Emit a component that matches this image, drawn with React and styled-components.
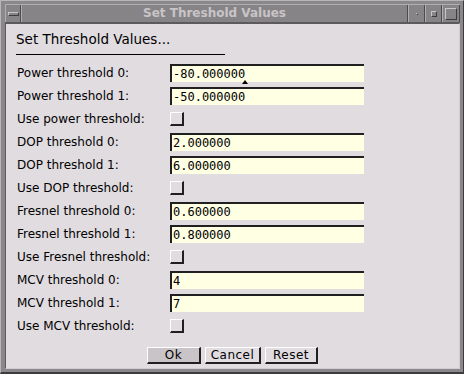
import { Fragment } from "react";
import styled, { createGlobalStyle } from "styled-components";

const Global = createGlobalStyle`
  html, body {
    margin: 0;
    padding: 0;
    background: #505050;
  }
`;

const Frame = styled.div`
  width: 464px;
  height: 374px;
  box-sizing: border-box;
  background: #8a888a;
  border-top: 1px solid #b8b6b8;
  border-left: 1px solid #b8b6b8;
  border-right: 1px solid #3c3c3c;
  border-bottom: 2px solid #3c3c3c;
  padding: 3px 3px 3px 4px;
  display: flex;
  flex-direction: column;
  font-family: "DejaVu Sans", sans-serif;
`;

const TitleBar = styled.div`
  height: 17px;
  display: flex;
  background: #868486;
  border-top: 1px solid #b0aeb0;
  border-bottom: 1px solid #5c5a5c;
`;

const TitleButton = styled.div`
  width: ${(p) => p.$w || 16}px;
  box-sizing: border-box;
  border-left: 1px solid #b0aeb0;
  border-right: 1px solid #4c4a4c;
  display: flex;
  align-items: center;
  justify-content: center;
`;

const Glyph = styled.div`
  width: ${(p) => p.$w}px;
  height: ${(p) => p.$h}px;
  box-sizing: border-box;
  border-top: 1px solid #c8c6c8;
  border-left: 1px solid #c8c6c8;
  border-right: 1px solid #3c3c3c;
  border-bottom: 1px solid #3c3c3c;
`;

const Title = styled.div`
  flex: 1;
  text-align: center;
  font-family: "DejaVu Sans", sans-serif;
  font-weight: bold;
  font-size: 12px;
  line-height: 16px;
  color: #c8c4c8;
  border-left: 1px solid #b0aeb0;
  border-right: 1px solid #4c4a4c;
`;

const Body = styled.div`
  flex: 1;
  background: #e0dce0;
  border-top: 1px solid #5c5a5c;
  border-left: 1px solid #5c5a5c;
  border-right: 1px solid #d0ced0;
  border-bottom: 1px solid #d0ced0;
  padding: 6px 0 0 10px;
  display: flex;
  flex-direction: column;
`;

const Heading = styled.div`
  font-family: "DejaVu Sans", sans-serif;
  font-size: 13.5px;
  color: #000;
  line-height: 18px;
  width: 209px;
  padding-bottom: 6px;
  border-bottom: 1.5px solid #000;
`;

const Grid = styled.div`
  margin-top: 9px;
  display: grid;
  grid-template-columns: 154px 194px;
  grid-auto-rows: 18px;
  row-gap: 5px;
  align-items: center;
`;

const Label = styled.div`
  font-size: 12px;
  color: #000;
  padding-left: 1px;
  line-height: 18px;
`;

const Field = styled.div`
  position: relative;
  height: 18px;
  box-sizing: border-box;
  background: #ffffe4;
  border-top: 2px solid #202020;
  border-left: 2px solid #202020;
  font-family: "DejaVu Sans Mono", monospace;
  font-size: 12px;
  line-height: 16px;
  padding-left: 1px;
  color: #000;
`;

const Caret = styled.span`
  position: relative;
  &::after {
    content: "";
    position: absolute;
    left: -3px;
    bottom: -3px;
    border-left: 3px solid transparent;
    border-right: 3px solid transparent;
    border-bottom: 4px solid #000;
  }
`;

const Check = styled.div`
  width: 14px;
  height: 14px;
  box-sizing: border-box;
  border-top: 1px solid #fff;
  border-left: 1px solid #fff;
  border-right: 2px solid #202020;
  border-bottom: 2px solid #202020;
  background: #e0dce0;
`;

const Buttons = styled.div`
  margin-top: 12px;
  margin-left: -10px;
  display: flex;
  justify-content: center;
  gap: 4px;
`;

const Button = styled.div`
  width: ${(p) => p.$w}px;
  height: 17px;
  box-sizing: border-box;
  background: ${(p) => (p.$active ? "#c8c4c8" : "#e0dce0")};
  border-top: 1px solid #fff;
  border-left: 1px solid #fff;
  border-right: 2px solid #202020;
  border-bottom: 2px solid #202020;
  font-size: 12px;
  line-height: 14px;
  text-align: center;
  letter-spacing: 0.5px;
  color: #000;
`;

const rows = [
  ["Power threshold 0:", "-80.000000", true],
  ["Power threshold 1:", "-50.000000"],
  ["Use power threshold:", null],
  ["DOP threshold 0:", "2.000000"],
  ["DOP threshold 1:", "6.000000"],
  ["Use DOP threshold:", null],
  ["Fresnel threshold 0:", "0.600000"],
  ["Fresnel threshold 1:", "0.800000"],
  ["Use Fresnel threshold:", null],
  ["MCV threshold 0:", "4"],
  ["MCV threshold 1:", "7"],
  ["Use MCV threshold:", null],
];

export default function App() {
  return (
    <>
      <Global />
      <Frame>
        <TitleBar>
          <TitleButton $w={16}>
            <Glyph $w={11} $h={4} />
          </TitleButton>
          <Title>Set Threshold Values</Title>
          <TitleButton $w={17}>
            <Glyph $w={2} $h={2} />
          </TitleButton>
          <TitleButton $w={17}>
            <Glyph $w={6} $h={6} />
          </TitleButton>
          <TitleButton $w={18}>
            <Glyph $w={12} $h={12} />
          </TitleButton>
        </TitleBar>
        <Body>
          <Heading>Set Threshold Values...</Heading>
          <Grid>
            {rows.map(([label, value, focus]) => (
              <Fragment key={label}>
                <Label>{label}</Label>
                {value === null ? (
                  <Check />
                ) : (
                  <Field>
                    {value}
                    {focus && <Caret />}
                  </Field>
                )}
              </Fragment>
            ))}
          </Grid>
          <Buttons>
            <Button $w={54} $active>Ok</Button>
            <Button $w={56}>Cancel</Button>
            <Button $w={53}>Reset</Button>
          </Buttons>
        </Body>
      </Frame>
    </>
  );
}
